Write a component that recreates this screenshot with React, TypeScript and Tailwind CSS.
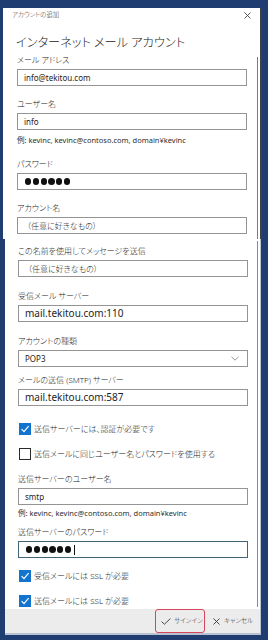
import React from "react";

const Label = ({ t, cls = "" }: { t: string; cls?: string }) => (
  <div className={"h-[12px] leading-[12px] text-[8px] text-[#262626] whitespace-nowrap " + cls}>{t}</div>
);

const Box = ({ children, focused = false, cls = "" }: { children?: React.ReactNode; focused?: boolean; cls?: string }) => (
  <div
    className={
      "mt-[3px] h-[17px] w-[230px] flex items-center pl-[6px] whitespace-nowrap text-[#1e1e1e] bg-white font-normal " +
      (focused ? "border-[1.5px] border-[#3f6577] " : "border border-[#949494] ") +
      cls
    }
  >
    {children}
  </div>
);

const Dots = ({ caret = false }: { caret?: boolean }) => (
  <div className="flex items-center gap-[1.6px] pl-[1px]">
    {[0, 1, 2, 3, 4, 5].map((i) => (
      <div key={i} className="w-[6.2px] h-[6.2px] rounded-full bg-[#111]" />
    ))}
    {caret && <div className="w-[1px] h-[10px] bg-[#111] ml-[1px]" />}
  </div>
);

const Check = ({ checked, t, cls = "" }: { checked: boolean; t: string; cls?: string }) => (
  <div className={"h-[12px] flex items-center " + cls}>
    {checked ? (
      <div className="ml-[1px] w-[12px] h-[12px] bg-[#1274cf] flex items-center justify-center">
        <svg width="10" height="10" viewBox="0 0 10 10">
          <path d="M1.6 5.2 L4 7.6 L8.6 2.2" fill="none" stroke="#fff" strokeWidth="1.2" />
        </svg>
      </div>
    ) : (
      <div className="ml-[1px] w-[12px] h-[12px] border-[1.5px] border-[#2a2a2a] bg-white" />
    )}
    <div className="ml-[3px] text-[8px] leading-[12px] text-[#262626] whitespace-nowrap">{t}</div>
  </div>
);

const Example = ({ cls = "" }: { cls?: string }) => (
  <div className={"h-[12px] leading-[12px] text-[7.5px] text-[#2e2e2e] whitespace-nowrap font-normal " + cls}>
    例: kevinc, kevinc@contoso.com, domain¥kevinc
  </div>
);

export default function App() {
  return (
    <div className="w-[268px] h-[640px] bg-[#1f3d70] flex flex-col overflow-hidden font-light font-['Noto_Sans','Noto_Sans_CJK_JP',sans-serif] [font-feature-settings:'palt']">
      {/* top screenshot */}
      <div className="h-[239px] pt-[8px] pl-[3px] pr-[6px] flex flex-col">
        <div className="relative flex-1 bg-white border-r-[2px] border-[#3c4048] overflow-hidden pl-[14px]">
          <div className="absolute right-[2px] top-[49px] bottom-0 w-[1px] bg-[#7a7a7a]" />
          <div className="h-[14px] flex items-center justify-between -ml-[5px] pr-[9px]">
            <div className="text-[6.4px] text-[#333] whitespace-nowrap">アカウントの追加</div>
            <svg width="7" height="7" viewBox="0 0 7 7">
              <path d="M0.5 0.5 L6.5 6.5 M6.5 0.5 L0.5 6.5" stroke="#444" strokeWidth="0.9" />
            </svg>
          </div>
          <div className="mt-[13px] h-[16px] leading-[16px] text-[12.2px] text-[#1a1a1a] whitespace-nowrap -ml-[1px]">
            インターネット メール アカウント
          </div>
          <div className="mt-[3px]">
            <Label t="メール アドレス" />
            <Box><span className="text-[8px]">info@tekitou.com</span></Box>
          </div>
          <div className="mt-[12px]">
            <Label t="ユーザー名" />
            <Box><span className="text-[8px]">info</span></Box>
          </div>
          <Example cls="mt-[4px]" />
          <div className="mt-[12px]">
            <Label t="パスワード" />
            <Box><Dots /></Box>
          </div>
          <div className="mt-[12px]">
            <Label t="アカウント名" />
            <Box><span className="text-[8px] pl-[3px] font-light">（任意に好きなもの）</span></Box>
          </div>
        </div>
      </div>

      {/* bottom screenshot */}
      <div className="flex-1 pl-[5px] pr-[7px] pb-[5px] flex flex-col">
        <div className="relative flex-1 bg-white border-r border-b-[2px] border-[#b8c2d0] flex flex-col">
          <div className="absolute right-[2px] top-[2px] h-[366px] w-[1.5px] bg-[#8a8a8a]" />
          <div className="flex-1 pl-[13px] pt-[6px] flex flex-col">
            <div>
              <Label t="この名前を使用してメッセージを送信" />
              <Box><span className="text-[8px] pl-[3px] font-light">（任意に好きなもの）</span></Box>
            </div>
            <div className="mt-[13px]">
              <Label t="受信メール サーバー" />
              <Box><span className="text-[10px]">mail.tekitou.com:110</span></Box>
            </div>
            <div className="mt-[13px]">
              <Label t="アカウントの種類" />
              <Box cls="justify-between pr-[8px]">
                <span className="text-[8px]">POP3</span>
                <svg width="8" height="5" viewBox="0 0 8 5">
                  <path d="M0.5 0.8 L4 4.2 L7.5 0.8" fill="none" stroke="#8a8a8a" strokeWidth="0.9" />
                </svg>
              </Box>
            </div>
            <div className="mt-[7px]">
              <Label t="メールの送信 (SMTP) サーバー" />
              <Box><span className="text-[10px]">mail.tekitou.com:587</span></Box>
            </div>
            <Check checked t="送信サーバーには、認証が必要です" cls="mt-[17px]" />
            <Check checked={false} t="送信メールに同じユーザー名とパスワードを使用する" cls="mt-[13px]" />
            <div className="mt-[13px]">
              <Label t="送信サーバーのユーザー名" />
              <Box><span className="text-[8px]">smtp</span></Box>
            </div>
            <Example cls="mt-[2px]" />
            <div className="mt-[7px]">
              <Label t="送信サーバーのパスワード" />
              <Box focused><Dots caret /></Box>
            </div>
            <Check checked t="受信メールには SSL が必要" cls="mt-[12px]" />
            <Check checked t="送信メールには SSL が必要" cls="mt-[13px]" />
          </div>
          <div className="h-[24px] bg-[#ececec] flex items-stretch justify-end pr-[7px]">
            <div className="w-[50px] border-[1.5px] border-[#d6465a] rounded-[3px] flex items-center pl-[5px]">
              <svg width="10" height="7" viewBox="0 0 10 7">
                <path d="M0.6 3.6 L3.4 6.2 L9.4 0.6" fill="none" stroke="#333" strokeWidth="0.9" />
              </svg>
              <span className="ml-[3px] text-[6.4px] text-[#222] whitespace-nowrap">サインイン</span>
            </div>
            <div className="ml-[8px] flex items-center">
              <svg width="7" height="7" viewBox="0 0 7 7">
                <path d="M0.5 0.5 L6.5 6.5 M6.5 0.5 L0.5 6.5" stroke="#333" strokeWidth="0.9" />
              </svg>
              <span className="ml-[4px] text-[6.4px] text-[#222] whitespace-nowrap">キャンセル</span>
            </div>
          </div>
        </div>
      </div>
    </div>
  );
}
